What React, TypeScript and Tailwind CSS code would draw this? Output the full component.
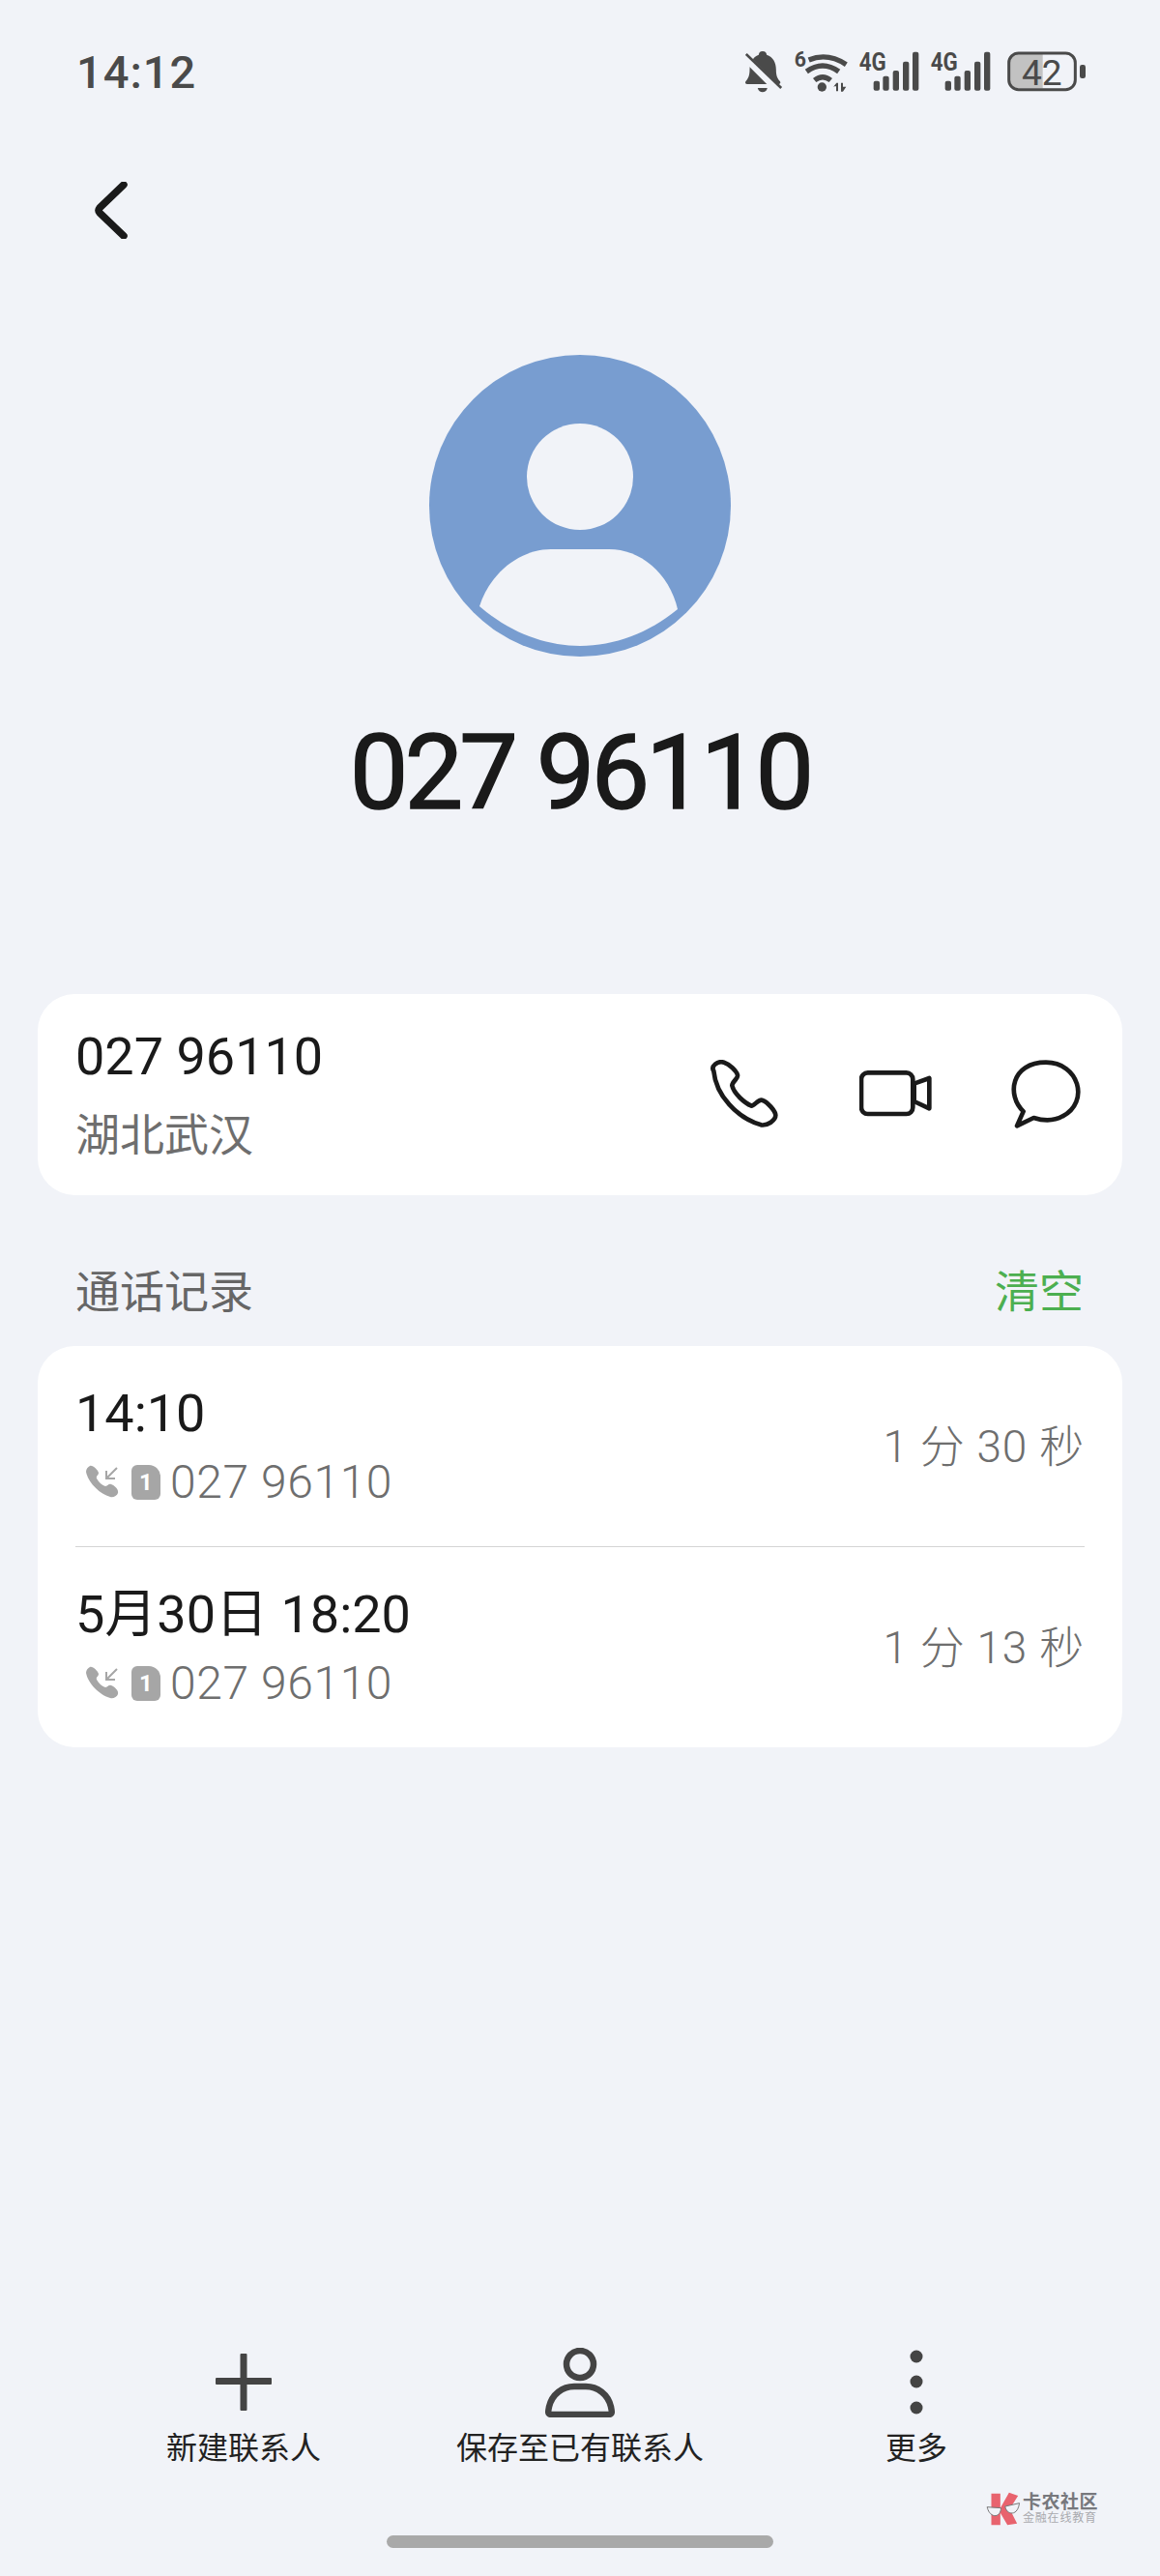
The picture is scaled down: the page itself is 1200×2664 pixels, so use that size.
const font = "font-['Roboto','Noto_Sans_CJK_SC',sans-serif]";

const records = [
  { time: "14:10", duration: "1 分 30 秒" },
  { time: "5月30日 18:20", duration: "1 分 13 秒" },
];

function StatusIcons() {
  return (
    <div className="flex items-start gap-[12px]">
      <svg className="w-[39px] h-[43px]" viewBox="95 38 116 129" fill="#4a4a4a">
        <path d="M148 38c9 0 12 5 13 11 20 7 29 24 29 46 0 18 4 28 12 36 3 4 1 9-4 9H100c-5 0-7-5-4-9 8-8 12-18 12-36 0-22 10-39 28-46 1-6 4-11 12-11z" />
        <path d="M133 152h30c-2 9-8 13-15 13s-13-4-15-13z" />
        <path d="M88 50L196 158" stroke="#f1f3f8" strokeWidth="24" />
        <path d="M97 47L206 152" stroke="#4a4a4a" strokeWidth="8" />
      </svg>
      <svg className="w-[55px] h-[43px] overflow-visible" viewBox="248 35 165 129">
        <text x="247" y="84" fontFamily="Roboto" fontWeight="700" fontSize="64" fill="#4a4a4a">6</text>
        <g fill="none" stroke="#4a4a4a" strokeWidth="16">
          <path d="M292 62Q350 38 408 76" />
          <path d="M285 98Q335 62 385 98" />
          <path d="M310 125Q335 105 360 125" />
        </g>
        <circle cx="333" cy="146" r="14" fill="#4a4a4a" />
        <path d="M368 146l10-13h5v26h-6v-15h-9zM392 133h6v12h10l-10 15h-6z" fill="#4a4a4a" />
      </svg>
      <Signal />
      <Signal />
      <svg className="ml-[5px] w-[81px] h-[43px]" viewBox="905 38 243 129">
        <path d="M938 46h77v107h-77a26 26 0 0 1-26-26V72a26 26 0 0 1 26-26z" fill="#c2c2c2" />
        <rect x="910" y="44" width="206" height="113" rx="30" fill="none" stroke="#4a4a4a" strokeWidth="9" />
        <rect x="1130" y="80" width="18" height="42" rx="7" fill="#4a4a4a" />
        <text x="950" y="143" fontFamily="Roboto" fontSize="112" textLength="125" lengthAdjust="spacingAndGlyphs" fill="#4a4a4a">42</text>
      </svg>
    </div>
  );
}

function Signal() {
  return (
    <svg className="w-[62px] h-[43px] overflow-visible" viewBox="448 38 186 129" fill="#4a4a4a">
      <text x="447" y="98" fontFamily="Roboto" fontWeight="700" fontSize="76" textLength="84" lengthAdjust="spacingAndGlyphs">4G</text>
      <rect x="492" y="130" width="19" height="30" rx="6" />
      <rect x="521" y="115" width="19" height="45" rx="6" />
      <rect x="552" y="98" width="19" height="62" rx="6" />
      <rect x="583" y="70" width="19" height="90" rx="6" />
      <rect x="613" y="40" width="19" height="120" rx="6" />
    </svg>
  );
}

function CallRow({ time, duration }: { time: string; duration: string }) {
  return (
    <div className="flex items-center justify-between h-[207px] pb-[2px]">
      <div>
        <p className="-mt-[1px] text-[54px] leading-[60px] text-[#1a1a1a]">{time}</p>
        <div className="flex items-center mt-[17px] pl-[10px] h-[48px]">
          <svg className="w-[36px] h-[36px]" viewBox="0 0 36 36" fill="#a6a6a6">
            <path d="M5 1c3-1 8 4 9 7 0 3-3 3-2 6 2 4 6 7 9 8 3 0 3-3 6-2 3 1 8 5 7 9-1 3-5 5-8 4C15 30 3 18 1 7c0-3 2-5 4-6z" />
            <path d="M33 3L22 14M22 6v8h9" fill="none" stroke="#a6a6a6" strokeWidth="2" />
          </svg>
          <div className="relative ml-[12px] w-[30px] h-[36px] bg-[#a6a6a6] rounded-[6px] rounded-tr-[12px] flex items-center justify-center text-white text-[24px] font-bold leading-none">
            1
          </div>
          <span className="ml-[10px] text-[48px] leading-[48px] font-light text-[#6e6e6e] tracking-[0.6px]">027 96110</span>
        </div>
      </div>
      <p className="mt-[4px] text-[46px] font-light text-[#6e6e6e] tracking-[0.8px]">{duration}</p>
    </div>
  );
}

export default function App() {
  return (
    <div className={`${font} relative flex flex-col h-[2664px] bg-[#f1f3f8]`}>
      {/* status bar */}
      <div className="flex items-start justify-between pt-[53px] pl-[79px] pr-[77px]">
        <span className="text-[47px] leading-[43px] font-medium text-[#4a4a4a] tracking-[1px]">14:12</span>
        <StatusIcons />
      </div>

      <svg className="ml-[96px] mt-[92px] w-[38px] h-[59px]" viewBox="0 0 38 59" fill="none">
        <path d="M32 3L7 27q-2 2.500 0 5L32 56" stroke="#1a1a1a" strokeWidth="7.500" strokeLinecap="round" strokeLinejoin="round" />
      </svg>

      {/* avatar */}
      <svg className="self-center mt-[120px] w-[312px] h-[312px]" viewBox="444 367 312 312">
        <circle cx="600" cy="523" r="156" fill="#789dd0" />
        <circle cx="600" cy="493" r="55" fill="#f1f3f8" />
        <path d="M496 627C508 590 540 568 570 568H630C662 568 692 592 701 630C640 680 560 682 496 627Z" fill="#f1f3f8" />
      </svg>

      <h1 className="text-center mt-[60px] text-[108px] leading-[120px] font-normal text-[#1a1a1a] tracking-[-4px] [-webkit-text-stroke:1.5px_#1a1a1a]">027 96110</h1>

      {/* number card */}
      <div className="mx-[39px] mt-[169px] h-[208px] bg-white rounded-[38px] flex items-center justify-between pl-[39px] pr-[42px]">
        <div>
          <p className="-mt-[2px] text-[54px] leading-[60px] text-[#1a1a1a]">027 96110</p>
          <p className="mt-[25px] text-[46px] leading-[52px] text-[#6e6e6e]">湖北武汉</p>
        </div>
        <div className="flex items-center">
          <svg className="w-[72px] h-[72px]" viewBox="105 170 216 216" fill="none" stroke="#1a1a1a" strokeWidth="14" strokeLinejoin="round">
            <path d="M118 205C108 190 130 172 150 178C165 183 190 205 192 218C194 228 175 238 175 250C180 275 215 305 235 313C245 313 255 292 268 295C285 300 310 330 310 342C310 358 285 375 265 372C190 350 125 280 118 205Z" />
          </svg>
          <svg className="ml-[83px] w-[76px] h-[50px]" viewBox="572 204 228 150" fill="none" stroke="#1a1a1a" strokeWidth="14" strokeLinejoin="round">
            <rect x="578" y="211" width="160" height="128" rx="20" />
            <path d="M742 245L789 228V322L742 300Z" />
          </svg>
          <svg className="ml-[81px] w-[73px] h-[72px]" viewBox="1040 170 219 216" fill="none" stroke="#1a1a1a" strokeWidth="14" strokeLinejoin="round">
            <path d="M1078 330C1025 280 1040 178 1148 178C1250 178 1285 300 1200 345C1170 362 1135 358 1110 350L1058 375Z" />
          </svg>
        </div>
      </div>

      {/* call log */}
      <div className="flex items-center justify-between mt-[70px] h-[60px] pl-[78px] pr-[79px] text-[46px]">
        <span className="text-[#666666]">通话记录</span>
        <span className="text-[#4caf50]">清空</span>
      </div>
      <div className="mx-[39px] mt-[26px] px-[39px] bg-white rounded-[38px]">
        <CallRow {...records[0]} />
        <div className="h-px bg-[#d4d4d4]" />
        <CallRow {...records[1]} />
      </div>

      {/* bottom actions */}
      <div className="mt-auto grid grid-cols-3 px-[78px] text-[32px] leading-[40px] text-[#222222]">
        <div className="flex flex-col items-center">
          <svg className="w-[72px] h-[72px]" viewBox="0 0 72 72" fill="#444444">
            <rect x="7" y="31" width="58" height="7" rx="1" />
            <rect x="32.500" y="6" width="7" height="59" rx="1" />
          </svg>
          <span className="mt-[12px]">新建联系人</span>
        </div>
        <div className="flex flex-col items-center">
          <svg className="w-[72px] h-[72px]" viewBox="0 0 72 72" fill="none" stroke="#444444" strokeWidth="6.500">
            <circle cx="36" cy="17" r="14" />
            <path d="M7 69c-5 0-4-3-3-8 3-13 14-21 26-21h12c12 0 23 8 26 21 1 5 2 8-3 8Z" strokeLinejoin="round" />
          </svg>
          <span className="mt-[12px]">保存至已有联系人</span>
        </div>
        <div className="flex flex-col items-center">
          <svg className="w-[72px] h-[72px]" viewBox="0 0 72 72" fill="#444444">
            <circle cx="36" cy="9" r="6.500" />
            <circle cx="36" cy="35" r="6.500" />
            <circle cx="36" cy="62" r="6.500" />
          </svg>
          <span className="mt-[12px]">更多</span>
        </div>
      </div>
      <div className="self-center mt-[70px] mb-[29px] w-[400px] h-[13px] rounded-full bg-[#a9a9a9]" />

      {/* watermark */}
      <div className="absolute left-[1020px] top-[2577px] flex items-center">
        <svg className="w-[36px] h-[35px]" viewBox="120 50 105 105">
          <path d="M135 55H163V100L190 52L218 62L192 103L215 148L185 153L163 115V153H135Z" fill="#e8636e" />
          <path d="M122 97L165 100C165 115 155 125 145 124C132 122 125 110 122 97Z" fill="#f1f3f8" stroke="#777777" strokeWidth="3" />
          <path d="M178 95L222 85C220 102 212 115 200 116C188 116 180 108 178 95Z" fill="#f1f3f8" stroke="#777777" strokeWidth="3" />
        </svg>
        <div className="ml-[2px] flex flex-col">
          <span className="text-[19px] leading-[20px] font-bold tracking-[0.5px] text-[#77787d]">卡农社区</span>
          <span className="text-[12px] leading-[13px] tracking-[0.8px] text-[#a9aaae]">金融在线教育</span>
        </div>
      </div>
    </div>
  );
}
